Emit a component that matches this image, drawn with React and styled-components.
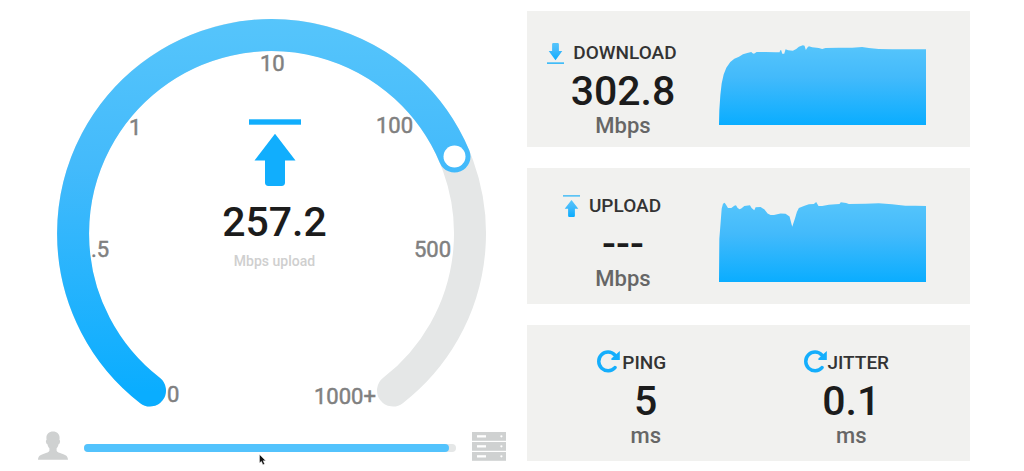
import React from 'react';
import styled, { createGlobalStyle } from 'styled-components';

const GlobalStyle = createGlobalStyle`
  * {
    box-sizing: border-box;
  }

  body {
    margin: 0;
    background: #ffffff;
    font-family: Roboto, sans-serif;
  }
`;

const Page = styled.main`
  display: grid;
  grid-template-columns: minmax(0, 470fr) minmax(0, 443fr);
  column-gap: 20px;
  align-items: start;
  padding: 11px 54px 9px 37px;
`;

const GaugePanel = styled.section`
  display: flex;
  flex-direction: column;
  padding-top: 7px;
`;

const GaugeStack = styled.div`
  display: grid;
  padding: 0 20px;

  > * {
    grid-area: 1 / 1;
  }
`;

const Dial = styled.svg`
  display: block;
  width: 100%;
  height: auto;
`;

const ScaleLabel = styled.text`
  font-family: Roboto, sans-serif;
  font-size: 22px;
  fill: #808080;
  stroke: #808080;
  stroke-width: 0.5px;
`;

const Readout = styled.div`
  display: flex;
  flex-direction: column;
  align-items: center;
  padding: 101px 0 0 5px;
`;

const Value = styled.p`
  margin: 0;
  font-size: 41px;
  font-weight: 500;
  line-height: 44px;
  color: #1c1c1c;
`;

const ReadoutValue = styled(Value)`
  margin: 14px 0 6px;
`;

const ReadoutUnit = styled.p`
  margin: 0;
  font-size: 14px;
  font-weight: 500;
  line-height: 22px;
  color: #cfcfcf;
`;

const ProgressRow = styled.div`
  display: flex;
  align-items: center;
  gap: 16px;
  padding-top: 22px;

  > svg {
    flex: none;
  }
`;

const Track = styled.div`
  position: relative;
  flex: 1;
  height: 8px;
  margin-top: 4px;
  border-radius: 4px;
  background: #e5e7e7;
`;

const Fill = styled.div`
  height: 100%;
  border-radius: 4px;
  background: #53c3fd;
`;

const Pointer = styled.svg`
  position: absolute;
  top: 10px;
  left: 47%;
`;

const Cards = styled.section`
  display: grid;
  gap: 21px;
`;

const Card = styled.article`
  display: grid;
  grid-template-columns: ${props => (props.$split ? '1fr 1fr' : '192px minmax(0, 1fr)')};
  min-height: 136px;
  padding: ${props => (props.$split ? '0 16px' : '0 44px 0 0')};
  background: #f1f1ef;
`;

const StatBox = styled.div`
  display: flex;
  flex-direction: column;
  align-items: center;
  padding-top: ${props => props.$top}px;
`;

const StatHeader = styled.div`
  display: flex;
  align-items: center;
  gap: ${props => props.$gap}px;
  height: 24px;
  margin-bottom: 4px;
  padding-right: ${props => props.$inset}px;
`;

const StatTitle = styled.h2`
  margin: 0;
  font-size: 19px;
  font-weight: 500;
  line-height: 24px;
  color: #333333;
`;

const Unit = styled.p`
  margin: 0;
  font-size: 22px;
  font-weight: 500;
  line-height: 26px;
  color: #666666;
`;

const Chart = styled.svg`
  display: block;
  width: 100%;
  height: 80px;
  margin-top: 34px;
`;

const SCALE = [
  { text: '0', x: 110, y: 384 },
  { text: '.5', x: 34, y: 239 },
  { text: '1', x: 72, y: 117 },
  { text: '10', x: 203, y: 53 },
  { text: '100', x: 319, y: 115 },
  { text: '500', x: 357, y: 239 },
  { text: '1000+', x: 257, y: 386 },
];

const DOWNLOAD_POINTS =
  '0,239 1,195 4,150 8,115 14,88 22,68 34,51 46,41 60,35 72,28 85,24 97,21 101,25 105,26 113,21 140,21 170,22 182,22 184,16 187,16 190,26 196,26 200,13 208,16 222,17 232,12 240,5 252,1 257,2 261,15 265,8 270,4 280,7 300,9 310,12 320,9 360,8 400,8 430,6 450,9 480,12 520,13 622,13 622,239';

const UPLOAD_POINTS =
  '0,239 1,110 5,60 8,20 12,5 17,2 22,10 27,18 37,18 46,11 51,10 56,18 62,22 68,19 76,12 93,10 98,18 106,25 110,16 125,15 136,22 146,34 155,39 165,39 185,34 200,35 212,43 220,74 228,50 234,30 240,18 255,12 270,7 285,6 292,0 299,12 310,12 330,8 350,7 362,6 366,1 382,3 390,6 440,5 480,4 520,7 560,11 590,11 622,12 622,239';

const BlueGradient = ({ id, ...rest }) => (
  <linearGradient id={id} x1="0" y1="0" x2="0" y2="1" {...rest}>
    <stop offset="0" stopColor="#56c5fb" />
    <stop offset="0.4" stopColor="#43bafb" />
    <stop offset="1" stopColor="#0aadff" />
  </linearGradient>
);

const DownloadIcon = () => (
  <svg width="17" height="22" viewBox="0 0 17 22" aria-hidden="true">
    <defs>
      <BlueGradient id="download-icon" />
    </defs>
    <path
      d="M6.3 1h4.400a1.200 1.200 0 0 1 1.200 1.200V9h3.400L8.500 18.200 1.700 9h3.400V2.200A1.200 1.200 0 0 1 6.300 1z"
      fill="url(#download-icon)"
    />
    <rect y="20.300" width="17" height="1.700" fill="#41bcf8" />
  </svg>
);

const UploadIcon = () => (
  <svg width="17" height="22" viewBox="0 0 17 22" aria-hidden="true">
    <defs>
      <BlueGradient id="upload-icon" />
    </defs>
    <rect width="17" height="1.7" fill="#5cc3f5" />
    <path
      d="M8.5 5l6.8 8.7h-3.4v7a1.2 1.2 0 0 1-1.2 1.2H6.3a1.2 1.2 0 0 1-1.2-1.2v-7H1.7z"
      fill="url(#upload-icon)"
    />
  </svg>
);

const CycleIcon = () => (
  <svg width="23" height="26" viewBox="0 0 23 26" aria-hidden="true">
    <path
      d="M18 17.6A9.3 9.3 0 1 1 17.8 5"
      fill="none"
      stroke="#14aefc"
      strokeWidth="3.5"
      strokeLinecap="round"
    />
    <path d="M22.8 1v8.900h-8.400v-1.400z" fill="#14aefc" />
  </svg>
);

const UserIcon = () => (
  <svg width="31" height="32" viewBox="0 0 31 32" aria-hidden="true">
    <path
      d="M16 1.500c4 0 6.600 2.400 6.600 6.500 0 .8-.1 1.300-.2 1.900.7.200.8 1 .6 2-.2 1.100-.6 2-1.300 2.200-.4 2-1.200 3.200-2.100 4.200v2.500c.6 1.400 2.600 2 5.400 2.900 3.800 1.200 5.800 2.200 6 6H1c.2-3.800 2.200-4.800 6-6 2.800-.9 4.800-1.500 5.400-2.900v-2.500c-.9-1-1.700-2.200-2.100-4.200-.7-.2-1.100-1.100-1.300-2.200-.2-1-.1-1.800.6-2-.1-.6-.2-1.100-.2-1.900 0-4.100 2.600-6.500 6.600-6.500z"
      fill="#cfd1d1"
    />
  </svg>
);

const ServerIcon = () => (
  <svg width="35" height="32" viewBox="0 0 35 32" aria-hidden="true">
    {[2, 12, 22].map(y => (
      <g key={y}>
        <rect x="0" y={y} width="34" height="8.800" fill="#cfd1d1" />
        <rect x="5" y={y + 3.2} width="9" height="2.300" fill="#ffffff" />
        <circle cx="29.400" cy={y + 4.3} r="1.100" fill="#ffffff" />
      </g>
    ))}
  </svg>
);

const Gauge = () => (
  <GaugeStack>
    <Dial viewBox="0 0 430 390" role="img" aria-label="Upload speed gauge">
      <defs>
        <BlueGradient id="dial" gradientUnits="userSpaceOnUse" x1="0" y1="0" x2="0" y2="374" />
      </defs>
      <g fill="none" strokeWidth="32" strokeLinecap="round">
        <path d="M93 372.500A198.500 198.500 0 1 1 336 372.500" stroke="#e5e7e7" />
        <path d="M93 372.500A198.500 198.500 0 1 1 397.500 138.500" stroke="url(#dial)" />
      </g>
      <circle cx="397.500" cy="138.500" r="11" fill="#ffffff" />
      {SCALE.map(label => (
        <ScaleLabel key={label.text} x={label.x} y={label.y}>
          {label.text}
        </ScaleLabel>
      ))}
    </Dial>
    <Readout>
      <svg width="52" height="67" viewBox="0 0 52 67" aria-hidden="true">
        <rect y="0.300" width="52" height="5.400" fill="#11aefd" />
        <path
          d="M26 14.700l20.500 26.800H36v22a3.400 3.400 0 0 1-3.400 3.400H19.400a3.400 3.400 0 0 1-3.400-3.400v-22H5.500z"
          fill="#11aefd"
        />
      </svg>
      <ReadoutValue>257.2</ReadoutValue>
      <ReadoutUnit>Mbps upload</ReadoutUnit>
    </Readout>
  </GaugeStack>
);

const TestProgress = ({ percent }) => (
  <ProgressRow>
    <UserIcon />
    <Track
      role="progressbar"
      aria-label="Test progress"
      aria-valuemin={0}
      aria-valuemax={100}
      aria-valuenow={percent}
    >
      <Fill style={{ width: `${percent}%` }} />
      <Pointer width="8" height="12" viewBox="0 0 8 12" aria-hidden="true">
        <path
          d="M.5.500v8.500l1.900-1.700 1.500 3.500 1.700-.8-1.500-3.300h2.600z"
          fill="#111111"
          stroke="#ffffff"
          strokeWidth="0.400"
        />
      </Pointer>
    </Track>
    <ServerIcon />
  </ProgressRow>
);

const Stat = ({ icon, title, value, unit, top = 26, gap = 9, inset = 22 }) => (
  <StatBox $top={top}>
    <StatHeader $gap={gap} $inset={inset}>
      {icon}
      <StatTitle>{title}</StatTitle>
    </StatHeader>
    <Value>{value}</Value>
    <Unit>{unit}</Unit>
  </StatBox>
);

const SpeedChart = ({ id, label, points }) => (
  <Chart viewBox="0 0 622 239" preserveAspectRatio="none" role="img" aria-label={label}>
    <defs>
      <BlueGradient id={id} />
    </defs>
    <polygon points={points} fill={`url(#${id})`} />
  </Chart>
);

export default function App() {
  return (
    <>
      <GlobalStyle />
      <Page>
        <GaugePanel>
          <Gauge />
          <TestProgress percent={98} />
        </GaugePanel>
        <Cards>
          <Card>
            <Stat icon={<DownloadIcon />} title="DOWNLOAD" value="302.8" unit="Mbps" top={30} />
            <SpeedChart id="download-chart" label="Download speed" points={DOWNLOAD_POINTS} />
          </Card>
          <Card>
            <Stat icon={<UploadIcon />} title="UPLOAD" value="---" unit="Mbps" />
            <SpeedChart id="upload-chart" label="Upload speed" points={UPLOAD_POINTS} />
          </Card>
          <Card $split>
            <Stat icon={<CycleIcon />} title="PING" value="5" unit="ms" gap={2} inset={28} />
            <Stat icon={<CycleIcon />} title="JITTER" value="0.1" unit="ms" gap={0} inset={9} />
          </Card>
        </Cards>
      </Page>
    </>
  );
}
